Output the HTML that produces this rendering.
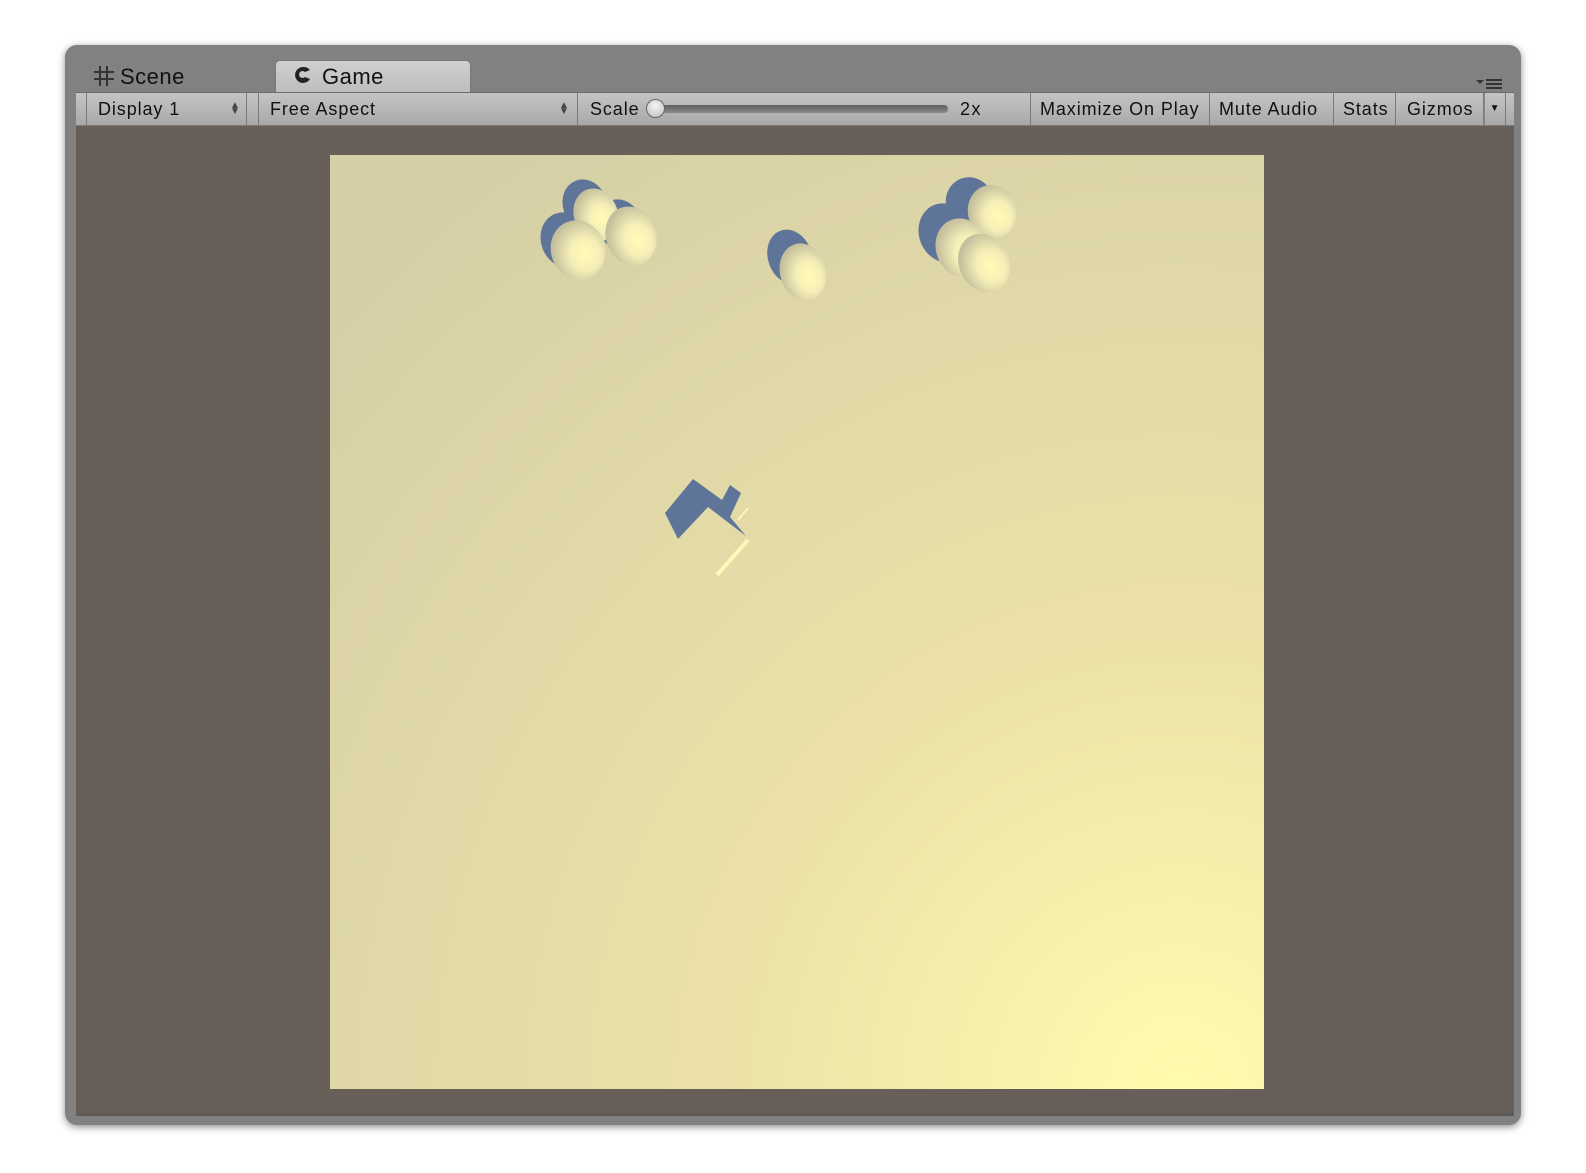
<!DOCTYPE html>
<html><head><style>
body{margin:0;width:1586px;height:1173px;background:#fff;position:relative;overflow:hidden;font-family:"Liberation Sans",sans-serif;}
.win{position:absolute;left:65px;top:45px;width:1456px;height:1080px;background:#818181;border-radius:12px;box-shadow:0 2px 8px rgba(0,0,0,.45);}
.tab{position:absolute;font-size:22px;color:#111;letter-spacing:.5px}
.tb{position:absolute;left:76px;top:92px;width:1438px;height:34px;background:linear-gradient(#c4c4c4,#a9a9a9);border-top:1px solid #6a6a6a;border-bottom:1px solid #7c7c7c;box-sizing:border-box;}
.it{position:absolute;top:0;height:32px;line-height:32px;font-size:18px;color:#111;border-right:1px solid #7a7a7a;box-sizing:border-box;letter-spacing:.9px}
.content{position:absolute;left:76px;top:126px;width:1438px;height:987px;background:#695f59;border-bottom:3px solid #5e5a57}
.updn{position:absolute;font-size:10px;line-height:6px;color:#444}
</style></head><body>
<div class="win"></div>
<svg style="position:absolute;left:94px;top:66px" width="20" height="20" viewBox="0 0 20 20"><path d="M6 0v20M13 0v20M0 6h20M0 13h20" stroke="#333" stroke-width="2"/></svg>
<div class="tab" style="left:120px;top:64px;">Scene</div>
<div style="position:absolute;left:275px;top:60px;width:196px;height:33px;background:linear-gradient(#d0d0d0,#bdbdbd);border:1px solid #777;border-bottom:none;border-radius:5px 5px 0 0;box-sizing:border-box"></div>
<svg style="position:absolute;left:294px;top:66px" width="18" height="18" viewBox="0 0 18 18"><path d="M9 1 A8 8 0 1 0 16 13 L11 11 A3.5 3.5 0 1 1 11 6 L16 4 A8 8 0 0 0 9 1Z" fill="#222"/></svg>
<div class="tab" style="left:322px;top:64px;">Game</div>
<svg style="position:absolute;left:1476px;top:78px" width="28" height="12"><path d="M0 2h8l-4 4z" fill="#333"/><rect x="10" y="1" width="16" height="2" fill="#333"/><rect x="10" y="5" width="16" height="2" fill="#333"/><rect x="10" y="9" width="16" height="2" fill="#333"/></svg>
<div class="tb">
 <div class="it" style="left:0;width:11px"></div>
 <div class="it" style="left:11px;width:160px;padding-left:11px">Display 1<span class="updn" style="left:143px;top:10px">▲<br>▼</span></div>
 <div class="it" style="left:171px;width:12px"></div>
 <div class="it" style="left:183px;width:319px;padding-left:11px">Free Aspect<span class="updn" style="left:300px;top:10px">▲<br>▼</span></div>
 <div class="it" style="left:502px;width:453px;padding-left:12px">Scale</div>
 <div class="it" style="left:955px;width:179px;padding-left:9px">Maximize On Play</div>
 <div class="it" style="left:1134px;width:124px;padding-left:9px">Mute Audio</div>
 <div class="it" style="left:1258px;width:62px;padding-left:9px">Stats</div>
 <div class="it" style="left:1320px;width:88px;padding-left:11px">Gizmos</div>
 <div class="it" style="left:1408px;width:22px;border-left:1px solid #888;font-size:10px;text-align:center">▼</div>
</div>
<div style="position:absolute;left:648px;top:105px;width:300px;height:8px;border-radius:4px;background:linear-gradient(#5e5e5e,#8a8a8a);"></div>
<div style="position:absolute;left:646px;top:99px;width:19px;height:19px;border-radius:50%;background:radial-gradient(circle at 50% 35%,#f4f4f4,#bdbdbd);border:1px solid #666;box-sizing:border-box"></div>
<div style="position:absolute;left:960px;top:99px;font-size:18px;color:#111;letter-spacing:1.5px">2x</div>
<div class="content"></div>
<svg style="position:absolute;left:330px;top:155px" width="934" height="934" viewBox="330 155 934 934">
<defs>
<radialGradient id="bg" cx="1180" cy="1089" r="1150" gradientUnits="userSpaceOnUse">
<stop offset="0" stop-color="#fffcad"/><stop offset="0.4" stop-color="#ebe1a8"/><stop offset="1" stop-color="#d5cfa6"/></radialGradient>
<radialGradient id="ball" cx="0.6" cy="0.6" r="0.6"><stop offset="0" stop-color="#fffcb4"/><stop offset="0.45" stop-color="#f6efb8"/><stop offset="1" stop-color="#c4bf9c"/></radialGradient>
</defs>
<rect x="330" y="155" width="934" height="934" fill="url(#bg)"/>
<g fill="#5f7499">
<ellipse cx="585" cy="205" rx="22" ry="26" transform="rotate(-20 585 205)"/>
<ellipse cx="620" cy="225" rx="22" ry="26" transform="rotate(-20 620 225)"/>
<ellipse cx="565" cy="240" rx="24" ry="28" transform="rotate(-20 565 240)"/>
<ellipse cx="790" cy="257" rx="22" ry="28" transform="rotate(-20 790 257)"/>
<ellipse cx="970" cy="203" rx="24" ry="26" transform="rotate(-20 970 203)"/>
<ellipse cx="945" cy="233" rx="26" ry="30" transform="rotate(-20 945 233)"/>
<polygon points="693,479 722,500 730,485 741,493 730,517 746,536 708,507 678,539 665,513"/>
</g>
<g fill="url(#ball)">
<ellipse cx="596" cy="215" rx="22" ry="27" transform="rotate(-20 596 215)"/>
<ellipse cx="631" cy="236" rx="25" ry="30" transform="rotate(-20 631 236)"/>
<ellipse cx="578" cy="250" rx="27" ry="30" transform="rotate(-20 578 250)"/>
<ellipse cx="803" cy="272" rx="23" ry="29" transform="rotate(-15 803 272)"/>
<ellipse cx="992" cy="212" rx="24" ry="27" transform="rotate(-15 992 212)"/>
<ellipse cx="962" cy="248" rx="26" ry="30" transform="rotate(-20 962 248)"/>
<ellipse cx="984" cy="263" rx="25" ry="30" transform="rotate(-25 984 263)"/>
</g>
<line x1="748" y1="540" x2="717" y2="575" stroke="#fff6b8" stroke-width="4"/>
<line x1="748" y1="508" x2="738" y2="520" stroke="#fff6b8" stroke-width="2"/>
</svg>
</body></html>
